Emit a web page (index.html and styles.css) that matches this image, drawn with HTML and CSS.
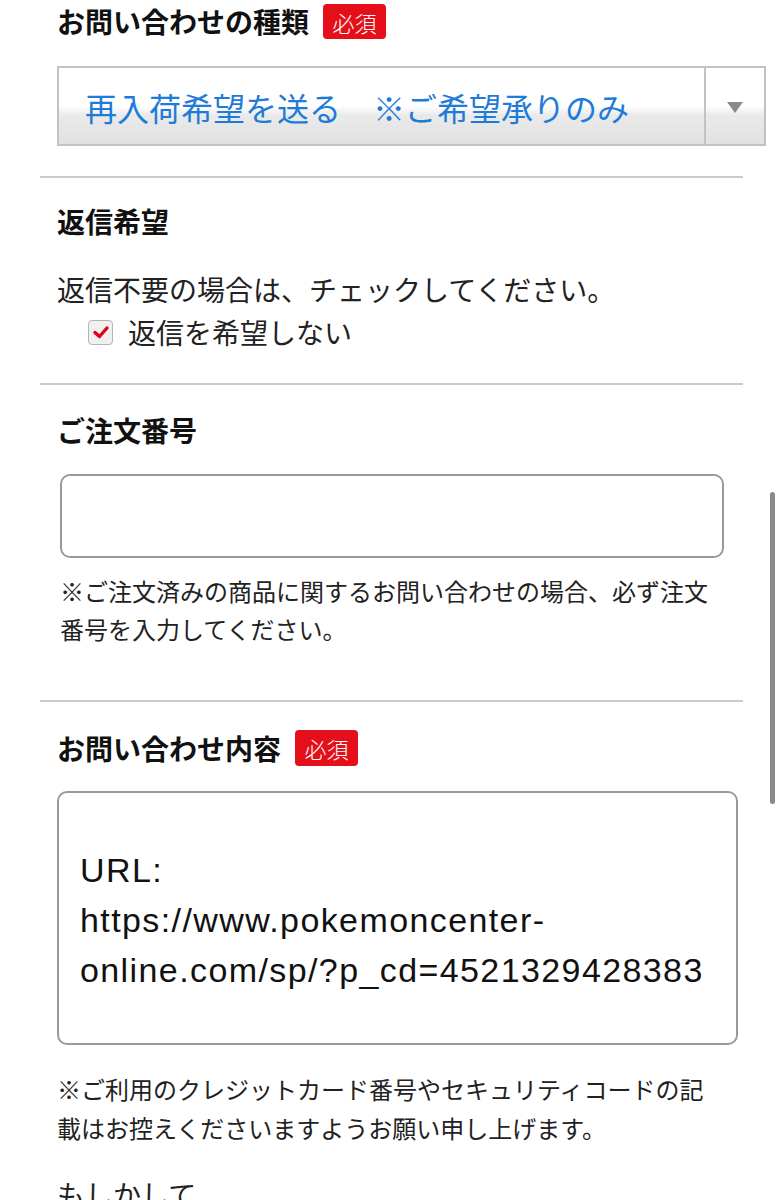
FILE: index.html
```html
<!DOCTYPE html>
<html lang="ja">
<head>
<meta charset="utf-8">
<title>お問い合わせ</title>
<link rel="stylesheet" href="styles.css">
</head>
<body>
<div class="page">
  <section class="field field-first">
    <div class="label-row">
      <h2 class="label">お問い合わせの種類</h2>
      <span class="badge">必須</span>
    </div>
    <div class="select">
      <span class="select-value">再入荷希望を送る　※ご希望承りのみ</span>
      <span class="select-btn"><span class="select-arrow"></span></span>
    </div>
  </section>

  <section class="field field-reply">
    <h2 class="label label-plain">返信希望</h2>
    <p class="body-text">返信不要の場合は、チェックしてください。</p>
    <label class="check-row">
      <span class="checkbox">
        <svg viewBox="0 0 24 24" width="24" height="24"><path d="M6 12.5 L10.5 16.5 L18 8" fill="none" stroke="#e3001b" stroke-width="3.4" stroke-linecap="round" stroke-linejoin="round"/></svg>
      </span>
      <span class="check-text">返信を希望しない</span>
    </label>
  </section>

  <section class="field field-order">
    <h2 class="label label-plain">ご注文番号</h2>
    <div class="input"></div>
    <p class="note note-order">※ご注文済みの商品に関するお問い合わせの場合、必ず注文番号を入力してください。</p>
  </section>

  <section class="field field-content">
    <div class="label-row label-row-content">
      <h2 class="label">お問い合わせ内容</h2>
      <span class="badge">必須</span>
    </div>
    <div class="textarea">
      <div class="ta-line">&nbsp;</div>
      <div class="ta-line">URL:</div>
      <div class="ta-line">https://www.pokemoncenter-</div>
      <div class="ta-line">online.com/sp/?p_cd=4521329428383</div>
      <div class="ta-line">&nbsp;</div>
    </div>
    <p class="note note-card">※ご利用のクレジットカード番号やセキュリティコードの記載はお控えくださいますようお願い申し上げます。</p>
    <p class="body-text maybe">もしかして...</p>
  </section>
</div>
<div class="scrollbar"></div>
</body>
</html>
```

FILE: styles.css
```css
html, body {
  margin: 0;
  padding: 0;
  background: #ffffff;
}

body {
  font-family: "Noto Sans CJK JP", "Noto Sans", sans-serif;
  color: #222222;
  overflow: hidden;
  height: 1200px;
}

.page {
  margin-left: 40px;
  width: 703px;
}

.field {
  border-top: 2px solid #cbcbcb;
  padding-left: 17px;
}

.field-first {
  border-top: none;
  padding-top: 4px;
  padding-bottom: 30px;
}

.label-row {
  display: flex;
  align-items: center;
  height: 35px;
  gap: 14px;
}

.label {
  margin: 0;
  font-size: 28px;
  font-weight: 700;
  line-height: 35px;
  color: #111111;
}

.label-plain {
  line-height: 40px;
}

.badge {
  display: flex;
  align-items: center;
  justify-content: center;
  width: 63px;
  height: 35px;
  border-radius: 4px;
  background: #e50f19;
  color: #ffffff;
  font-size: 22px;
  font-weight: 300;
  line-height: 1;
}

.select {
  margin-top: 27px;
  width: 709px;
  height: 80px;
  box-sizing: border-box;
  border: 2px solid #c2c2c2;
  display: flex;
  background: linear-gradient(#ffffff 0%, #ffffff 50%, #eaeaea 62%, #e1e1e1 100%);
}

.select-value {
  flex: 1;
  display: flex;
  align-items: center;
  padding-left: 26px;
  padding-top: 2px;
  font-size: 32px;
  color: #1f7bd8;
  white-space: nowrap;
}

.select-btn {
  width: 58px;
  border-left: 2px solid #c2c2c2;
  display: flex;
  align-items: center;
  justify-content: center;
}

.select-arrow {
  width: 0;
  height: 0;
  border-left: 8px solid transparent;
  border-right: 8px solid transparent;
  border-top: 11px solid #8a8a8a;
  margin-top: 2px;
}

.field-reply {
  padding-top: 23px;
  padding-bottom: 29px;
}

.body-text {
  margin: 27px 0 0;
  font-size: 28px;
  line-height: 42px;
  color: #222222;
}

.check-row {
  display: flex;
  align-items: center;
  height: 44px;
  padding-left: 31px;
  gap: 15px;
}

.checkbox {
  width: 25px;
  height: 25px;
  box-sizing: border-box;
  border: 1.5px solid #b4b4b4;
  border-radius: 4px;
  background: #f0f0f0;
  display: flex;
  align-items: center;
  justify-content: center;
}

.checkbox svg {
  display: block;
  flex: none;
}

.check-text {
  font-size: 28px;
  line-height: 44px;
  color: #222222;
}

.field-order {
  padding-top: 25px;
  padding-bottom: 52px;
}

.input {
  margin-top: 24px;
  margin-left: 3px;
  width: 664px;
  height: 84px;
  box-sizing: border-box;
  border: 2px solid #9a9a9a;
  border-radius: 10px;
}

.note {
  margin: 0;
  font-size: 24px;
  color: #222222;
}

.note-order {
  margin-top: 14px;
  margin-left: 3px;
  width: 655px;
  line-height: 38px;
}

.field-content {
  padding-top: 28px;
}

.label-row-content {
  height: 36px;
  gap: 14px;
}

.label-row-content .badge {
  height: 36px;
}

.textarea {
  margin-top: 25px;
  width: 681px;
  box-sizing: border-box;
  border: 2px solid #9a9a9a;
  border-radius: 10px;
  padding: 2px 10px 0 21px;
  height: 254px;
  font-family: "Liberation Sans", Arial, sans-serif;
  font-size: 34px;
  letter-spacing: 1.4px;
  color: #111111;
}

.ta-line {
  line-height: 50px;
  white-space: nowrap;
}

.note-card {
  margin-top: 24px;
  width: 655px;
  line-height: 39px;
}

.maybe {
  margin-top: 27px;
  line-height: 40px;
}

.scrollbar {
  position: fixed;
  left: 770px;
  top: 492px;
  width: 5px;
  height: 312px;
  border-radius: 3px;
  background: #8a8a8a;
}
```
